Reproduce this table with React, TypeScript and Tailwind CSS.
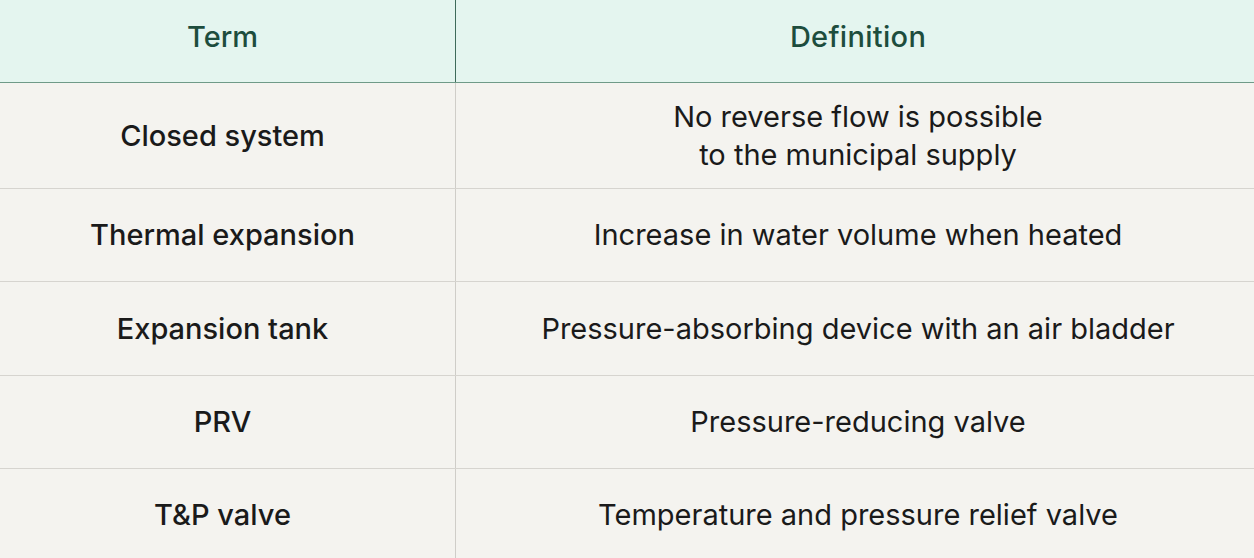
import React from "react";

const rows: { term: string; def: string[]; h: string }[] = [
  { term: "Closed system", def: ["No reverse flow is possible", "to the municipal supply"], h: "h-[106px]" },
  { term: "Thermal expansion", def: ["Increase in water volume when heated"], h: "h-[93px]" },
  { term: "Expansion tank", def: ["Pressure-absorbing device with an air bladder"], h: "h-[94px]" },
  { term: "PRV", def: ["Pressure-reducing valve"], h: "h-[93px]" },
  { term: "T&P valve", def: ["Temperature and pressure relief valve"], h: "h-[93px]" },
];

export default function App() {
  return (
    <div
      className="w-[1254px] h-[558px] overflow-hidden bg-[#f4f3ef]"
      style={{ fontFamily: "Inter, 'Noto Sans', sans-serif" }}
    >
      <div className="flex h-[83px] bg-[#e4f5ef] border-b border-[#6f9a88]">
        <div className="w-[456px] flex items-center justify-center pr-[10px] pb-[9px] border-r border-[#3e6b5a] text-[29px] font-medium text-[#1d4d3d]">
          Term
        </div>
        <div className="flex-1 flex items-center justify-center pl-[6px] pb-[9px] text-[29px] font-medium tracking-[0.3px] text-[#1d4d3d]">
          Definition
        </div>
      </div>
      {rows.map((r, i) => (
        <div key={i} className={`flex ${r.h} border-b border-[#d6d4cf]`}>
          <div className="w-[456px] flex items-center justify-center pr-[10px] border-r border-[#cfcdc8] text-[29px] font-medium text-[#1a1a1a]">
            {r.term}
          </div>
          <div className="flex-1 flex flex-col items-center justify-center pl-[6px] text-[29px] leading-[38px] text-[#1a1a1a]">
            {r.def.map((l, j) => (
              <div key={j}>{l}</div>
            ))}
          </div>
        </div>
      ))}
    </div>
  );
}
